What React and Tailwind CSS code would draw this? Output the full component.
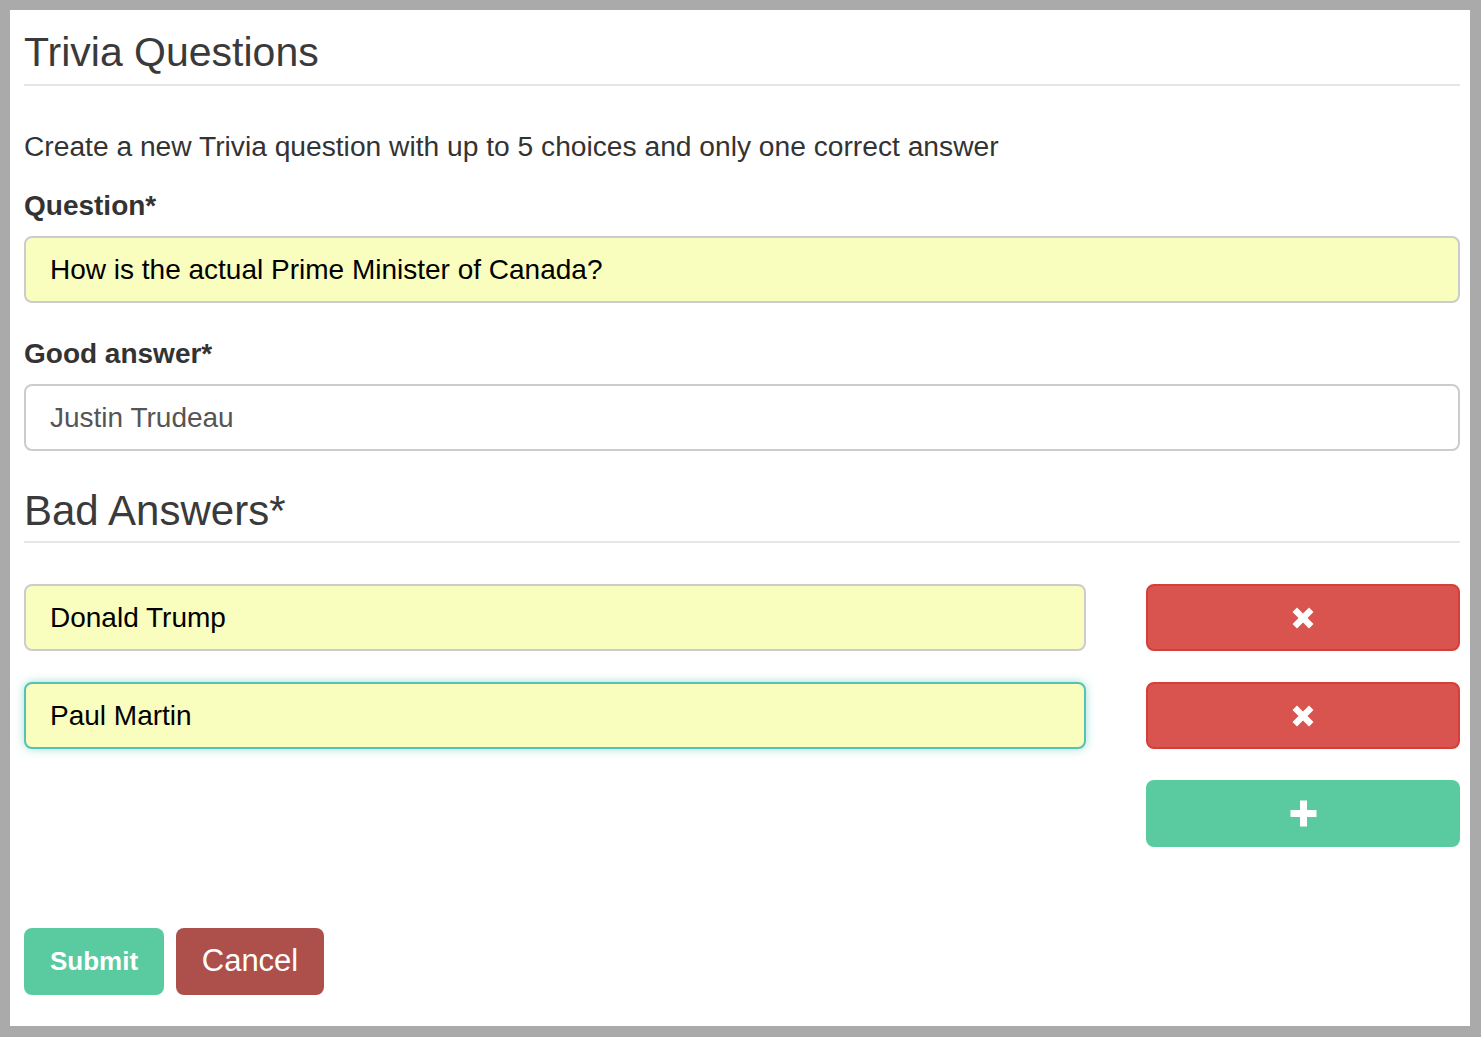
import React from "react";

const XIcon = () => (
  <svg width="24" height="24" viewBox="0 0 24 24" className="block">
    <path d="M1.5 6 L6 1.5 L12 7.5 L18 1.5 L22.5 6 L16.5 12 L22.5 18 L18 22.5 L12 16.5 L6 22.5 L1.5 18 L7.5 12 Z" fill="#fff" />
  </svg>
);

const PlusIcon = () => (
  <svg width="27" height="27" viewBox="0 0 27 27" className="block">
    <path d="M10 0.5 H17 V10 H26.5 V17 H17 V26.5 H10 V17 H0.5 V10 H10 Z" fill="#fff" />
  </svg>
);

export default function App() {
  const font = { fontFamily: '"Liberation Sans", Arial, Helvetica, sans-serif' };
  return (
    <div className="w-[1481px] h-[1037px] bg-[#aaaaaa] pt-[10px] pl-[10px] pr-[11px] pb-[11px]" style={font}>
      <div className="w-full h-full bg-white pt-[20px] pl-[14px] pr-[10px] pb-[31px] flex flex-col">
        <div className="border-b-2 border-[#e6e6e6] pb-[9px]">
          <h1 className="text-[41px] leading-[45px] text-[#3a3a3a] font-normal">Trivia Questions</h1>
        </div>
        <p className="mt-[40px] text-[28.2px] leading-[40px] text-[#333]">
          Create a new Trivia question with up to 5 choices and only one correct answer
        </p>
        <label className="mt-[20px] text-[28px] leading-[40px] font-bold text-[#333]">Question*</label>
        <div className="mt-[10px] h-[67px] rounded-[8px] border-2 border-[#cccccc] bg-[#f9fdbd] pl-[24px] flex items-center text-[28px] text-black">
          How is the actual Prime Minister of Canada?
        </div>
        <label className="mt-[31px] text-[28px] leading-[40px] font-bold text-[#333]">Good answer*</label>
        <div className="mt-[10px] h-[67px] rounded-[8px] border-2 border-[#cccccc] bg-white pl-[24px] flex items-center text-[28px] text-[#555]">
          Justin Trudeau
        </div>
        <div className="mt-[35px] border-b-2 border-[#e6e6e6] pb-[5px]">
          <h2 className="text-[42px] leading-[50px] text-[#3a3a3a] font-normal">Bad Answers*</h2>
        </div>
        <div className="mt-[41px] flex flex-col gap-[31px]">
          <div className="flex justify-between">
            <div className="w-[1062px] h-[67px] rounded-[8px] border-2 border-[#cccccc] bg-[#f9fdbd] pl-[24px] flex items-center text-[28px] text-black">
              Donald Trump
            </div>
            <button className="w-[314px] h-[67px] rounded-[8px] border-2 border-[#d43f3a] bg-[#d9534f] flex items-center justify-center">
              <XIcon />
            </button>
          </div>
          <div className="flex justify-between">
            <div className="w-[1062px] h-[67px] rounded-[8px] border-2 border-[#55c2b2] bg-[#f9fdbd] pl-[24px] flex items-center text-[28px] text-black shadow-[0_0_10px_rgba(85,194,178,0.55)]">
              Paul Martin
            </div>
            <button className="w-[314px] h-[67px] rounded-[8px] border-2 border-[#d43f3a] bg-[#d9534f] flex items-center justify-center">
              <XIcon />
            </button>
          </div>
          <div className="flex justify-end">
            <button className="w-[314px] h-[67px] rounded-[8px] bg-[#5acba0] flex items-center justify-center">
              <PlusIcon />
            </button>
          </div>
        </div>
        <div className="mt-[81px] flex gap-[12px]">
          <button className="w-[140px] h-[67px] rounded-[8px] bg-[#5acba0] text-white text-[26px] font-bold flex items-center justify-center">
            Submit
          </button>
          <button className="w-[148px] h-[67px] rounded-[8px] bg-[#ad4f4b] text-white text-[31px] flex items-center justify-center">
            Cancel
          </button>
        </div>
      </div>
    </div>
  );
}
